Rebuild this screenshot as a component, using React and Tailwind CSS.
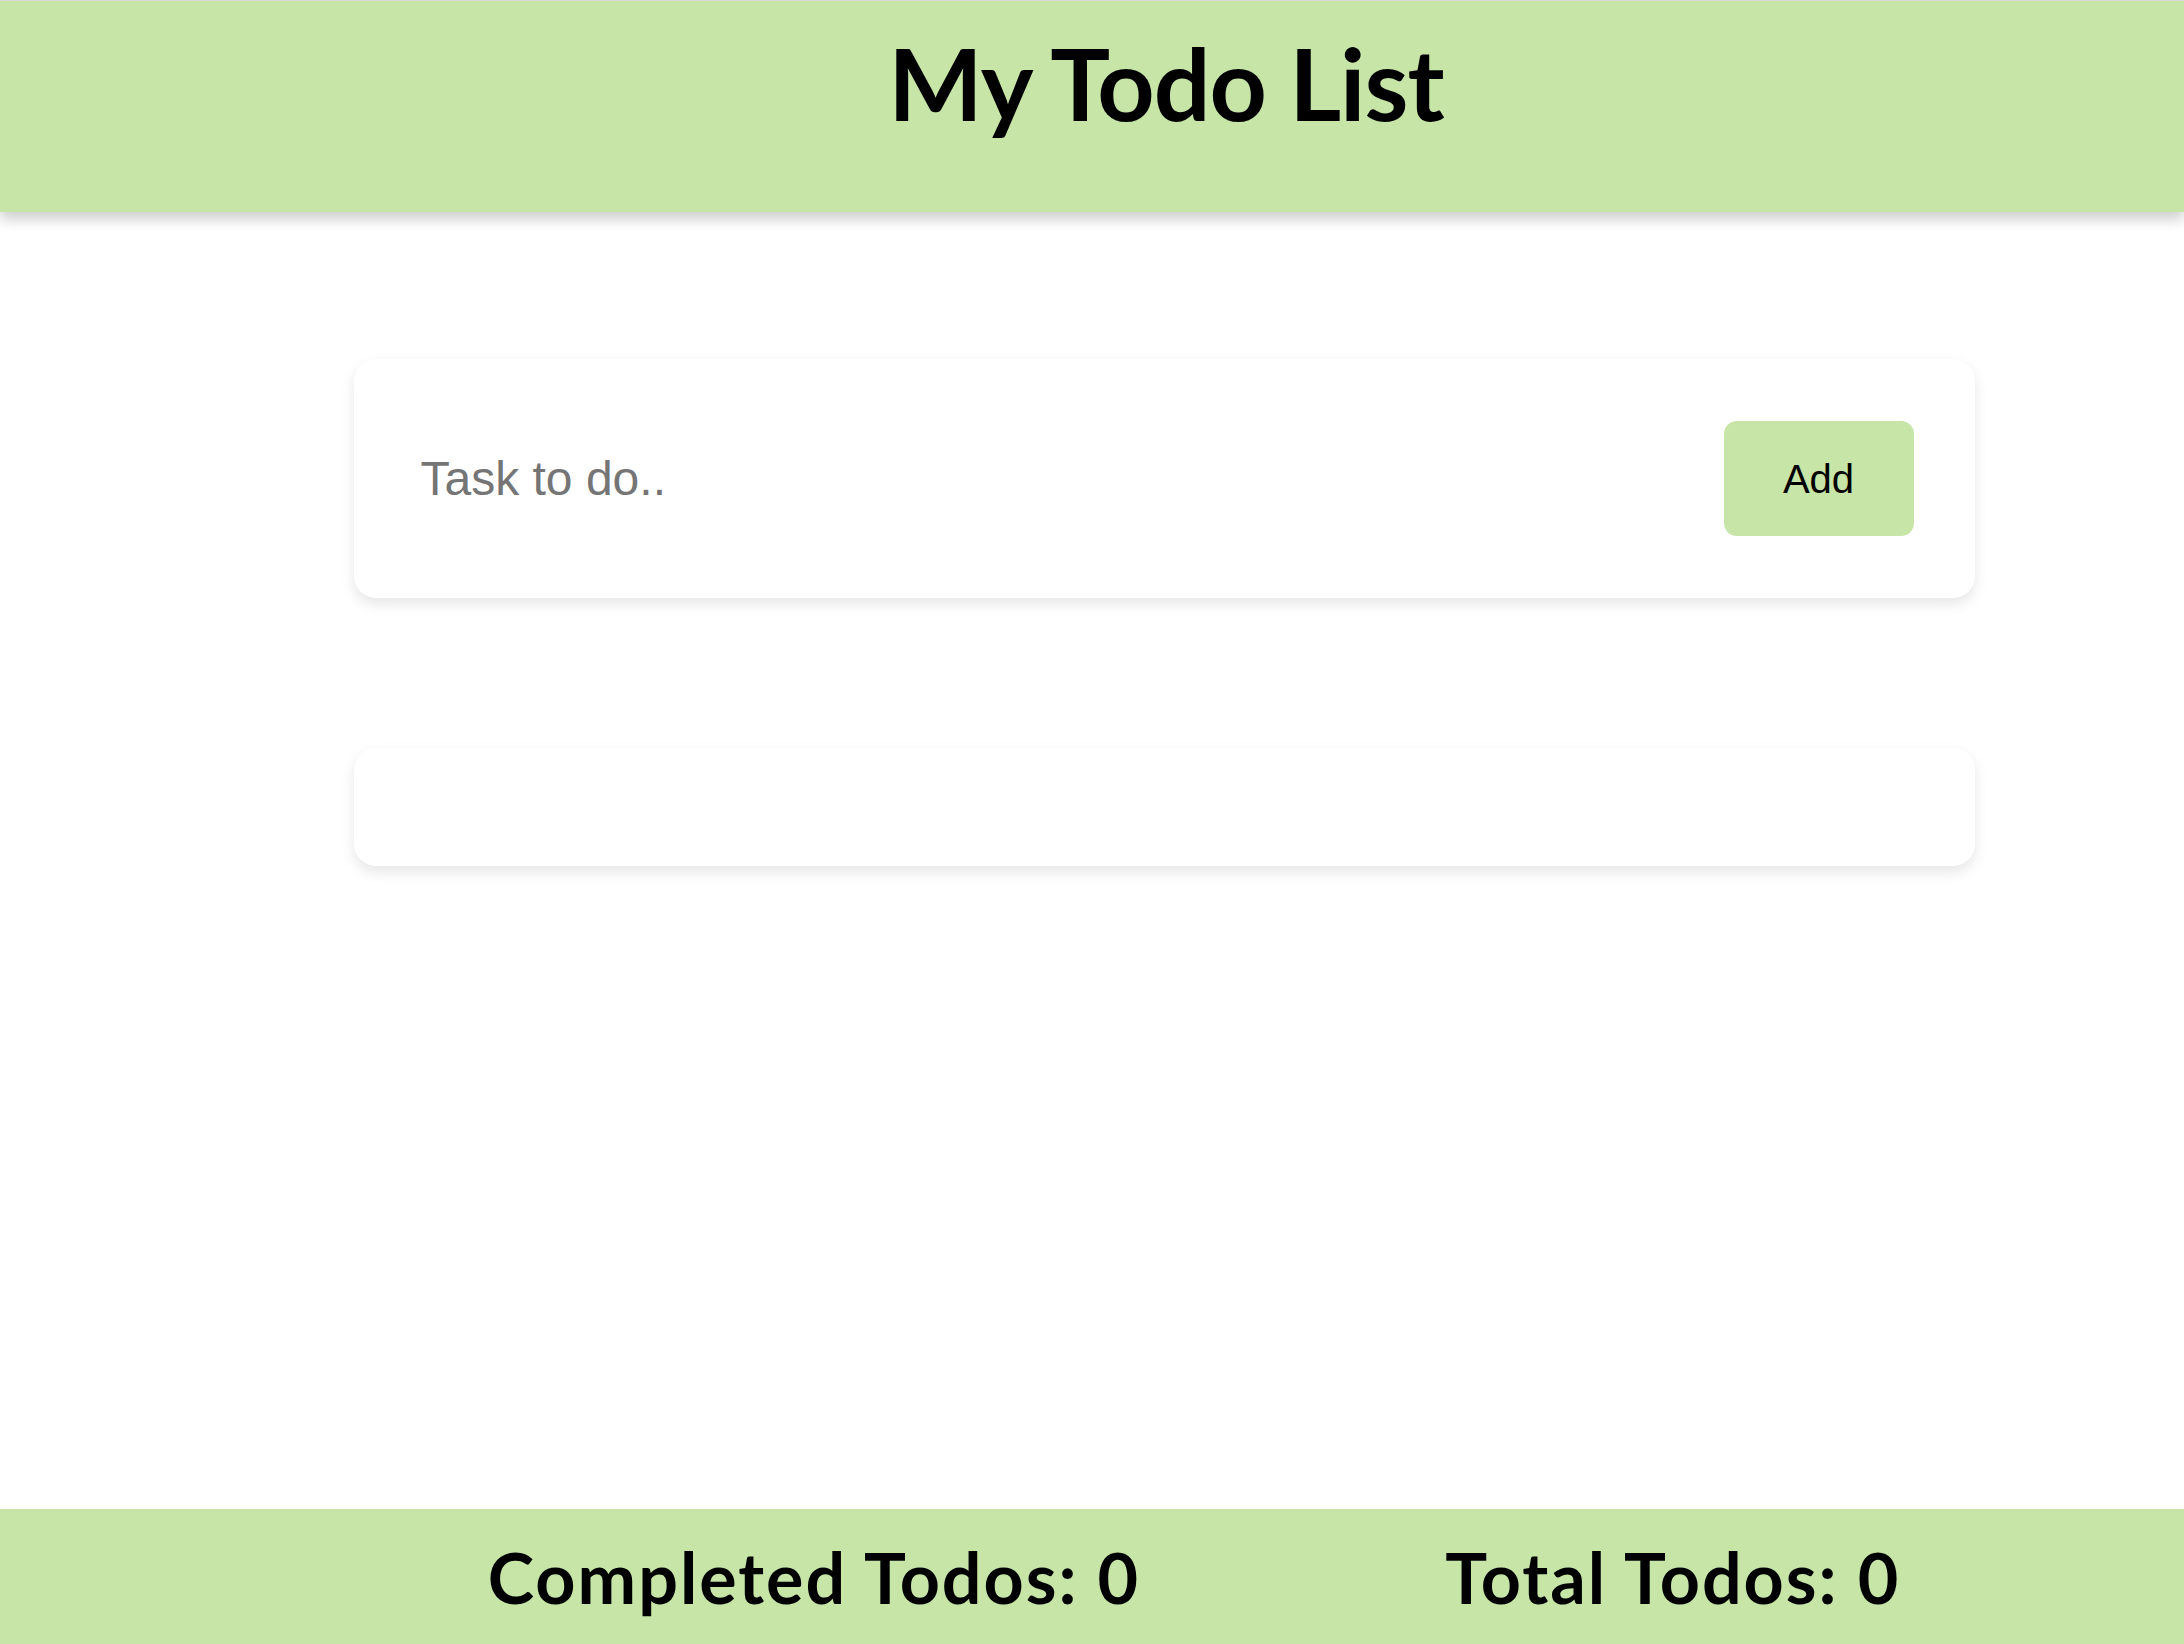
import React, { useState } from 'react';

function App() {
    const [task, setTask] = useState('');
    const [todos, setTodos] = useState([]);

    const handleAdd = () => {
        if (!task.trim()) return;
        setTodos([...todos, { text: task, done: false }]);
        setTask('');
    };

    const completed = todos.filter((t) => t.done).length;

    return (
        <div className="min-h-screen flex flex-col bg-white">
            <header className="h-[212px] bg-[#c6e5a6] border-t border-[#d9d9d9] shadow-[0_8px_12px_rgba(0,0,0,0.18)] flex justify-center pt-[31px] pl-[148px]">
                <h1 className="font-['Lato',sans-serif] font-bold text-[100px] leading-none tracking-[-1px] text-black">
                    My Todo List
                </h1>
            </header>

            <main className="flex flex-col items-center pt-[147px] pl-[144px] gap-[150px]">
                <div className="w-[1621px] h-[239px] bg-white rounded-[22px] shadow-[0_6px_14px_rgba(0,0,0,0.1)] flex items-center justify-between pl-[67px] pr-[61px]">
                    <input
                        type="text"
                        value={task}
                        onChange={(e) => setTask(e.target.value)}
                        placeholder="Task to do.."
                        className="flex-1 font-['Liberation_Sans',Arial,sans-serif] text-[48px] text-black placeholder:text-[#757575] outline-none bg-transparent"
                    />
                    <button
                        onClick={handleAdd}
                        className="w-[190px] h-[115px] bg-[#c6e5a6] rounded-[13px] font-['Liberation_Sans',Arial,sans-serif] text-[40px] text-black"
                    >
                        Add
                    </button>
                </div>

                <div className="w-[1621px] min-h-[118px] bg-white rounded-[22px] shadow-[0_6px_14px_rgba(0,0,0,0.1)]">
                    {todos.map((t, i) => (
                        <div key={i} className="px-[67px] py-6 text-[40px] font-['Liberation_Sans',Arial,sans-serif]">
                            {t.text}
                        </div>
                    ))}
                </div>
            </main>

            <footer className="mt-auto h-[135px] bg-[#c6e5a6] flex justify-center gap-[305px] pt-[33px] pl-[204px]">
                <span className="font-['Lato',sans-serif] font-bold text-[70px] leading-none tracking-[2px] text-black">
                    Completed Todos: {completed}
                </span>
                <span className="font-['Lato',sans-serif] font-bold text-[70px] leading-none tracking-[2px] text-black">
                    Total Todos: {todos.length}
                </span>
            </footer>
        </div>
    );
}

export default App;
